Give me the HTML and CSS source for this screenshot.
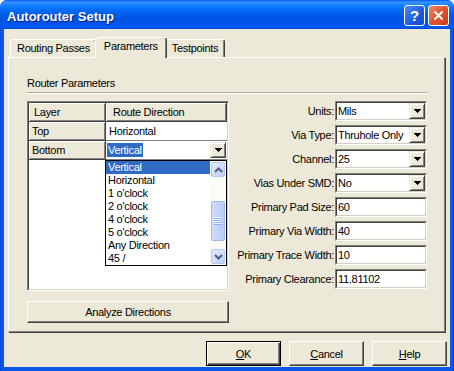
FILE: index.html
```html
<!DOCTYPE html>
<html lang="en">
<head>
    <meta charset="UTF-8">
    <title>Autorouter Setup</title>
    <link rel="stylesheet" href="styles.css">
</head>
<body>
<div class="window">
    <div class="titlebar">
        <span class="title">Autorouter Setup</span>
        <div class="caption-btns">
            <span class="cap-btn cap-help">?</span>
            <span class="cap-btn cap-close">
                <svg width="11" height="11" viewBox="0 0 11 11"><path d="M1.5 1.5 L9.5 9.5 M9.5 1.5 L1.5 9.5" stroke="#fff" stroke-width="2"/></svg>
            </span>
        </div>
    </div>

    <div class="client">
        <div class="tabs">
            <div class="tab">Routing Passes</div>
            <div class="tab active">Parameters</div>
            <div class="tab">Testpoints</div>
        </div>

        <div class="panel">
            <div class="group-title">Router Parameters</div>
            <div class="separator"></div>

            <div class="group-body">
                <div class="left-col">
                    <div class="grid">
                        <div class="grid-inner">
                            <div class="grid-row">
                                <div class="cell head col-layer">Layer</div>
                                <div class="cell head col-dir">Route Direction</div>
                            </div>
                            <div class="grid-row">
                                <div class="cell rowhead col-layer">Top</div>
                                <div class="cell data col-dir">Horizontal</div>
                            </div>
                            <div class="grid-row">
                                <div class="cell rowhead col-layer">Bottom</div>
                                <div class="cell data col-dir editing">
                                    <span class="sel-text">Vertical</span>
                                    <span class="drop-btn"><svg width="7" height="4"><path d="M0 0h7v1h-1v1h-1v1h-1v1h-1v-1h-1v-1h-1v-1h-1z"/></svg></span>

                                    <!-- open combo list -->
                                    <div class="droplist">
                                        <div class="items">
                                            <div class="item selected">Vertical</div>
                                            <div class="item">Horizontal</div>
                                            <div class="item">1 o'clock</div>
                                            <div class="item">2 o'clock</div>
                                            <div class="item">4 o'clock</div>
                                            <div class="item">5 o'clock</div>
                                            <div class="item">Any Direction</div>
                                            <div class="item">45 /</div>
                                        </div>
                                        <div class="scrollbar">
                                            <div class="sb-btn"><svg width="9" height="6"><path d="M1 5 L4.5 1.5 L8 5" fill="none" stroke="#4d6185" stroke-width="2"/></svg></div>
                                            <div class="sb-track">
                                                <div class="sb-thumb">
                                                    <svg width="8" height="8"><rect y="0" width="8" height="1" fill="#eef4fe"/><rect y="1" width="8" height="1" fill="#8cb0f8"/><rect y="2" width="8" height="1" fill="#eef4fe"/><rect y="3" width="8" height="1" fill="#8cb0f8"/><rect y="4" width="8" height="1" fill="#eef4fe"/><rect y="5" width="8" height="1" fill="#8cb0f8"/><rect y="6" width="8" height="1" fill="#eef4fe"/><rect y="7" width="8" height="1" fill="#8cb0f8"/></svg>
                                                </div>
                                            </div>
                                            <div class="sb-btn"><svg width="9" height="6"><path d="M1 1 L4.5 4.5 L8 1" fill="none" stroke="#4d6185" stroke-width="2"/></svg></div>
                                        </div>
                                    </div>
                                </div>
                            </div>
                        </div>
                    </div>
                    <button class="btn analyze">Analyze Directions</button>
                </div>

                <div class="form">
                    <div class="form-row">
                        <label>Units:</label>
                        <div class="field"><div class="field-inner"><span class="val">Mils</span><span class="drop-btn"><svg width="7" height="4"><path d="M0 0h7v1h-1v1h-1v1h-1v1h-1v-1h-1v-1h-1v-1h-1z"/></svg></span></div></div>
                    </div>
                    <div class="form-row">
                        <label>Via Type:</label>
                        <div class="field"><div class="field-inner"><span class="val">Thruhole Only</span><span class="drop-btn"><svg width="7" height="4"><path d="M0 0h7v1h-1v1h-1v1h-1v1h-1v-1h-1v-1h-1v-1h-1z"/></svg></span></div></div>
                    </div>
                    <div class="form-row">
                        <label>Channel:</label>
                        <div class="field"><div class="field-inner"><span class="val">25</span><span class="drop-btn"><svg width="7" height="4"><path d="M0 0h7v1h-1v1h-1v1h-1v1h-1v-1h-1v-1h-1v-1h-1z"/></svg></span></div></div>
                    </div>
                    <div class="form-row">
                        <label>Vias Under SMD:</label>
                        <div class="field"><div class="field-inner"><span class="val">No</span><span class="drop-btn"><svg width="7" height="4"><path d="M0 0h7v1h-1v1h-1v1h-1v1h-1v-1h-1v-1h-1v-1h-1z"/></svg></span></div></div>
                    </div>
                    <div class="form-row">
                        <label>Primary Pad Size:</label>
                        <div class="field"><div class="field-inner"><span class="val">60</span></div></div>
                    </div>
                    <div class="form-row">
                        <label>Primary Via Width:</label>
                        <div class="field"><div class="field-inner"><span class="val">40</span></div></div>
                    </div>
                    <div class="form-row">
                        <label>Primary Trace Width:</label>
                        <div class="field"><div class="field-inner"><span class="val">10</span></div></div>
                    </div>
                    <div class="form-row">
                        <label>Primary Clearance:</label>
                        <div class="field"><div class="field-inner"><span class="val">11.81102</span></div></div>
                    </div>
                </div>
            </div>
        </div>

        <div class="actions">
            <button class="btn default"><u>O</u>K</button>
            <button class="btn"><u>C</u>ancel</button>
            <button class="btn"><u>H</u>elp</button>
        </div>
    </div>
</div>
</body>
</html>
```

FILE: styles.css
```css
* {
    box-sizing: border-box;
}
body {
    margin: 0;
    font-family: "Liberation Sans", Arial, sans-serif;
    font-size: 11px;
    letter-spacing: -0.3px;
    color: #000;
    background: #fff;
}
.window {
    width: 454px;
    height: 371px;
    display: flex;
    flex-direction: column;
    background: linear-gradient(to right, #0036c4 0, #0a58e8 1px, #0a58e8 453px, #0036c4 453px);
    border-radius: 7px 7px 0 0;
    overflow: hidden;
}
/* Title bar */
.titlebar {
    height: 29px;
    flex: none;
    display: flex;
    justify-content: space-between;
    align-items: flex-start;
    padding: 5px 5px 0 7px;
    background: linear-gradient(#0058ee 0%, #3a93ff 7%, #288eff 12%, #127dff 20%, #036ffc 32%, #0262ee 44%, #0057e5 56%, #0054e3 72%, #0055eb 86%, #005bf5 90%, #0258f3 94%, #0049d2 100%);
}
.title {
    color: #fff;
    font-weight: bold;
    font-size: 13px;
    letter-spacing: 0;
    line-height: 21px;
    padding-top: 1px;
    text-shadow: 1px 1px #0a1883;
}
.caption-btns {
    display: flex;
    gap: 3px;
}
.cap-btn {
    width: 21px;
    height: 21px;
    border: 1px solid #fff;
    border-radius: 3px;
    display: flex;
    align-items: center;
    justify-content: center;
    color: #fff;
    font-weight: bold;
    font-size: 15px;
    letter-spacing: 0;
}
.cap-help {
    background: linear-gradient(135deg, #4d8af7, #1f5ae0 60%, #1648c8);
}
.cap-close {
    background: linear-gradient(135deg, #ee8a6e, #e0532f 50%, #c83c1c);
}
/* Client area */
.client {
    flex: 1;
    margin: 0 4px 4px;
    background: #ece9d8;
    padding: 8px 5px 0 4px;
    display: flex;
    flex-direction: column;
}
.tabs {
    display: flex;
    align-items: flex-end;
    height: 20px;
    padding-left: 2px;
    position: relative;
    z-index: 2;
}
.tab {
    height: 18px;
    line-height: 17px;
    padding: 0 6px;
    background: #ece9d8;
    border: 1px solid;
    border-color: #fff #404040 transparent #fff;
    border-bottom: 0;
    border-radius: 3px 3px 0 0;
    box-shadow: inset -1px 0 #808080;
}
.tab.active {
    height: 21px;
    line-height: 17px;
    margin: 0 -2px -1px;
    padding: 0 8px;
    position: relative;
}
.panel {
    height: 275px;
    flex: none;
    border: 1px solid;
    border-color: #fff #808080 #808080 #fff;
    box-shadow: 1px 1px 0 #404040;
    padding: 19px 17px 0 18px;
}
.group-title {
    line-height: 13px;
}
.separator {
    margin-top: 2px;
    height: 2px;
    border-top: 1px solid #aca899;
    border-bottom: 1px solid #fff;
}
.group-body {
    margin-top: 7px;
    display: flex;
    justify-content: space-between;
}
/* Left: direction grid */
.left-col {
    width: 202px;
    display: flex;
    flex-direction: column;
    gap: 10px;
}
.grid {
    height: 190px;
    border: 1px solid;
    border-color: #808080 #fff #fff #808080;
}
.grid-inner {
    height: 100%;
    border: 1px solid;
    border-color: #404040 #d4d0c8 #d4d0c8 #404040;
    background: #fff;
}
.grid-row {
    display: flex;
    height: 19px;
}
.cell {
    height: 19px;
    line-height: 18px;
    white-space: nowrap;
}
.col-layer {
    width: 77px;
    flex: none;
}
.col-dir {
    flex: 1;
}
.cell.head,
.cell.rowhead {
    background: #ece9d8;
    border-right: 1px solid #404040;
    border-bottom: 1px solid #404040;
    box-shadow: inset 1px 1px #fff, inset -1px -1px #808080;
}
.cell.head { padding-left: 5px; }
.cell.head.col-dir { padding-left: 7px; }
.cell.rowhead { padding-left: 3px; }
.cell.data {
    border-bottom: 1px solid #808080;
    padding-left: 3px;
}
.cell.editing {
    position: relative;
    display: flex;
    align-items: center;
    justify-content: space-between;
    padding: 0 1px 0 1px;
}
.sel-text {
    background: #316ac5;
    color: #fff;
    line-height: 14px;
    padding: 0 1px;
}
.drop-btn {
    width: 16px;
    height: 16px;
    flex: none;
    display: flex;
    align-items: center;
    justify-content: center;
    background: #ece9d8;
    border: 1px solid;
    border-color: #ece9d8 #404040 #404040 #ece9d8;
    box-shadow: inset 1px 1px #fff, inset -1px -1px #808080;
}
.droplist {
    position: absolute;
    left: -1px;
    top: 19px;
    width: 122px;
    height: 106px;
    border: 1px solid #000;
    background: #fff;
    display: flex;
    z-index: 5;
}
.items {
    flex: 1;
}
.item {
    height: 13px;
    line-height: 13px;
    padding-left: 2px;
}
.item.selected {
    background: #316ac5;
    color: #fff;
}
.scrollbar {
    width: 16px;
    display: flex;
    flex-direction: column;
    background: #fbfbf8;
}
.sb-btn {
    height: 15px;
    margin: 1px 1px 0;
    border: 1px solid #b4c8f6;
    border-radius: 2px;
    background: linear-gradient(135deg, #e4ecfd, #bccffa);
    display: flex;
    align-items: center;
    justify-content: center;
}
.sb-btn:last-child {
    margin: 0 1px 1px;
}
.sb-track {
    flex: 1;
    padding: 24px 1px 0;
}
.sb-thumb {
    height: 40px;
    border: 1px solid #a0b8ee;
    border-radius: 2px;
    background: linear-gradient(to right, #cfdcfc, #b9cbf7);
    display: flex;
    align-items: center;
    justify-content: center;
}
/* Buttons */
.btn {
    font: inherit;
    letter-spacing: inherit;
    color: #000;
    background: #ece9d8;
    border: 1px solid;
    border-color: #fff #404040 #404040 #fff;
    box-shadow: inset -1px -1px #808080;
    padding: 0;
    border-radius: 0;
}
.btn.analyze {
    height: 22px;
}
/* Right: parameter form */
.form {
    display: flex;
    flex-direction: column;
    gap: 4px;
}
.form-row {
    display: flex;
    align-items: center;
    justify-content: flex-end;
    gap: 1px;
    height: 20px;
}
.field {
    width: 92px;
    height: 20px;
    border: 1px solid;
    border-color: #808080 #fff #fff #808080;
}
.field-inner {
    height: 100%;
    border: 1px solid;
    border-color: #404040 #d4d0c8 #d4d0c8 #404040;
    background: #fff;
    display: flex;
    align-items: center;
    justify-content: space-between;
    padding-left: 1px;
}
/* Dialog buttons */
.actions {
    display: flex;
    justify-content: flex-end;
    gap: 8px;
    margin: 9px -2px 0 0;
}
.actions .btn {
    width: 75px;
    height: 25px;
}
.btn.default {
    border-color: #000;
    box-shadow: inset 1px 1px #fff, inset -1px -1px #404040, inset -2px -2px #808080;
}
```
